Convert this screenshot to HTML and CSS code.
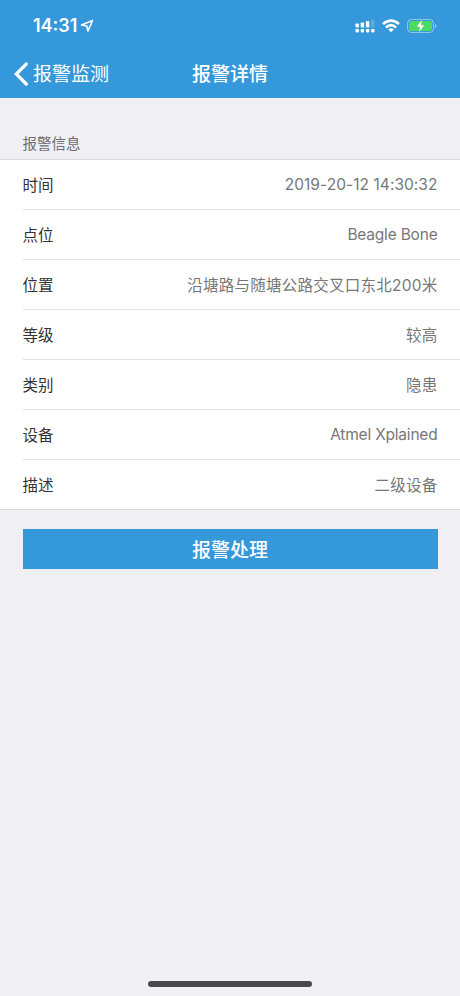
FILE: index.html
```html
<!DOCTYPE html>
<html lang="zh-CN">
<head>
  <meta charset="UTF-8">
  <meta name="viewport" content="width=device-width, initial-scale=1.0">
  <title>报警详情</title>
  <link rel="stylesheet" href="styles.css">
</head>
<body>

  <header class="header">
    <div class="status-bar">
      <div class="status-time">
        <span>14:31</span>
        <svg width="14" height="14" viewBox="0 0 14 14"><path d="M1.500 6 12.500 1.500 8 12 6.800 7Z" fill="none" stroke="#fff" stroke-width="1.600" stroke-linejoin="round"/></svg>
      </div>
      <div class="status-icons">
        <svg width="20" height="14" viewBox="0 0 20 14" fill="#fff">
          <rect x="0.500" y="4.500" width="3.400" height="4" rx="0.8"/>
          <rect x="5.700" y="3.500" width="3.400" height="5" rx="0.8"/>
          <rect x="10.900" y="2" width="3.400" height="6.500" rx="0.8"/>
          <rect x="16.100" y="0.500" width="3.400" height="8" rx="0.8" opacity="0.2"/>
          <rect x="0.500" y="10" width="3.400" height="3.400" rx="0.8"/>
          <rect x="5.700" y="10" width="3.400" height="3.400" rx="0.8"/>
          <rect x="10.900" y="10" width="3.400" height="3.400" rx="0.8"/>
          <rect x="16.100" y="10" width="3.400" height="3.400" rx="0.8"/>
        </svg>
        <svg width="18" height="14" viewBox="0 0 18 14" fill="none" stroke="#fff" stroke-width="2.600">
          <path d="M1 5Q9-1.800 17 5"/>
          <path d="M3.900 8.400Q9 4 14.100 8.400"/>
          <path d="M6.200 10.400Q9 8.200 11.800 10.400L9 13.300Z" fill="#fff" stroke="none"/>
        </svg>
        <svg width="30" height="14" viewBox="0 0 30 14">
          <rect x="0.500" y="0.500" width="26" height="13" rx="3.800" fill="none" stroke="#fff" stroke-opacity="0.450"/>
          <rect x="2" y="2" width="23" height="10" rx="2.300" fill="#4cd964"/>
          <path d="M27.800 4.700Q29.500 5.500 29.500 7T27.800 9.300Z" fill="#fff" opacity="0.450"/>
          <path d="M14.700 1 9.800 7.800H13L12.200 13 17.200 6.200H14Z" fill="#fff"/>
        </svg>
      </div>
    </div>
    <div class="nav-bar">
      <a class="back-btn" href="#">
        <svg width="14" height="24" viewBox="0 0 14 24"><path d="M12.300 2 2.300 12 12.300 22" fill="none" stroke="#fff" stroke-width="3.200" stroke-linecap="round"/></svg>
        <span>报警监测</span>
      </a>
      <h1>报警详情</h1>
    </div>
  </header>

  <main>
    <h2 class="section-title">报警信息</h2>
    <div class="info-list">
      <div class="info-row"><span class="label">时间</span><span class="value number">2019-20-12 14:30:32</span></div>
      <div class="info-row"><span class="label">点位</span><span class="value latin">Beagle Bone</span></div>
      <div class="info-row"><span class="label">位置</span><span class="value">沿塘路与随塘公路交叉口东北200米</span></div>
      <div class="info-row"><span class="label">等级</span><span class="value">较高</span></div>
      <div class="info-row"><span class="label">类别</span><span class="value">隐患</span></div>
      <div class="info-row"><span class="label">设备</span><span class="value latin">Atmel Xplained</span></div>
      <div class="info-row"><span class="label">描述</span><span class="value">二级设备</span></div>
    </div>
    <button class="handle-btn">报警处理</button>
  </main>

  <div class="home-bar"></div>

</body>
</html>
```
FILE: styles.css
```css
* {
  box-sizing: border-box;
}

body {
  margin: 0;
  height: 996px;
  display: flex;
  flex-direction: column;
  background-color: #efeff4;
  color: #333;
  font-family: Inter, "Noto Sans CJK SC", sans-serif;
  overflow: hidden;
}

.header {
  height: 98px;
  background-color: #3498db;
  color: #fff;
}

.status-bar {
  height: 50px;
  padding: 1px 23px 0 33px;
  display: flex;
  align-items: center;
  justify-content: space-between;
}

.status-time {
  display: flex;
  align-items: center;
  gap: 3px;
  font-size: 18px;
  font-weight: 600;
}

.status-icons {
  display: flex;
  align-items: center;
  gap: 7px;
}

.nav-bar {
  height: 48px;
  padding: 0 14px;
  display: grid;
  grid-template-columns: 1fr auto 1fr;
  align-items: center;
}

.back-btn {
  display: flex;
  align-items: center;
  gap: 5px;
  color: #fff;
  font-size: 19px;
  font-weight: 400;
  line-height: 28px;
  text-decoration: none;
}

.back-btn span,
.nav-bar h1 {
  padding-top: 2px;
}

.nav-bar h1 {
  margin: 0;
  font-size: 19px;
  font-weight: 500;
  line-height: 28px;
}

main {
  flex: 1;
}

.section-title {
  margin: 0;
  height: 61px;
  padding: 36px 22.5px 0;
  color: #6d6d72;
  font-size: 14.5px;
  font-weight: 400;
  line-height: 20px;
}

.info-list {
  height: 351px;
  background-color: #fff;
  border-top: 1px solid #d9d9dd;
  border-bottom: 1px solid #d9d9dd;
}

.info-row {
  height: 50px;
  margin-left: 22.5px;
  padding-right: 22.5px;
  display: flex;
  align-items: center;
  justify-content: space-between;
  border-bottom: 1px solid #e3e3e6;
  font-size: 15.5px;
}

.info-row:last-child {
  height: 49px;
  border-bottom: none;
}

.label,
.value {
  padding-bottom: 2px;
}

.value {
  color: #777;
  letter-spacing: 0.25px;
}

.value.number {
  padding-bottom: 0;
  letter-spacing: 0.05px;
}

.value.latin {
  padding-bottom: 0;
  letter-spacing: -0.2px;
}

.handle-btn {
  display: block;
  width: 415px;
  height: 40px;
  margin: 19.4px auto 0;
  padding: 0 0 1px;
  border: none;
  background-color: #3498db;
  color: #fff;
  font-family: inherit;
  font-size: 19px;
  font-weight: 500;
}

.home-bar {
  width: 164px;
  height: 6px;
  margin: 0 auto 9px;
  border-radius: 3px;
  background-color: #4a4a4c;
}
```
